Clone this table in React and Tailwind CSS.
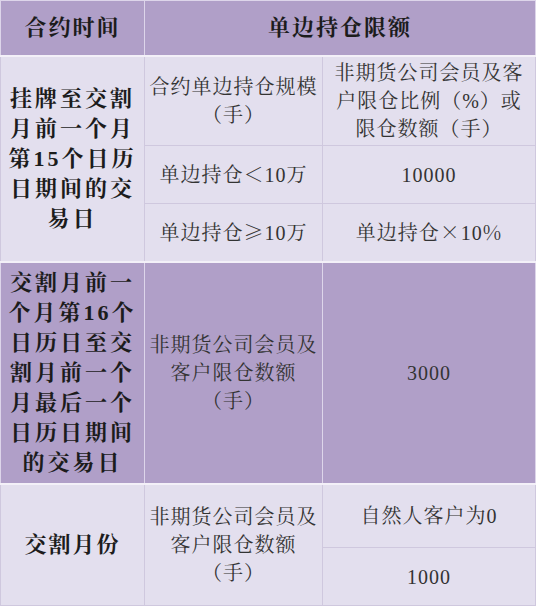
import React from 'react';

const font = { fontFamily: '"Liberation Serif", "Noto Serif CJK SC", "Noto Sans CJK SC", serif' };
const cjk = { fontFamily: '"Noto Serif CJK SC", "Noto Sans CJK SC", serif' };

function Lines({ lines }) {
  return lines.map((l, i) => <span key={i} className="block">{l}</span>);
}

export default function App() {
  const light = 'bg-[#e3dfee]';
  const dark = 'bg-[#b09fc8]';
  const cell = 'border border-[#cfc8de] text-center align-middle p-0';
  const head = 'text-[22px] font-bold tracking-[2px] text-[#1c1c1c] leading-[30px]';
  const body = 'text-[20px] tracking-[1px] text-[#333] leading-[28px]';

  return (
    <div className="w-[536px] h-[607px] bg-white overflow-hidden" style={font}>
      <table className="w-full border-collapse table-fixed">
        <colgroup>
          <col className="w-[144px]" />
          <col className="w-[178px]" />
          <col />
        </colgroup>
        <thead>
          <tr className={`h-[55px] ${dark}`}>
            <th className={`${cell} border-[#ddd5ea] border-b-2 border-b-[#f3f0f8] ${head}`}>合约时间</th>
            <th colSpan={2} className={`${cell} border-[#ddd5ea] border-b-2 border-b-[#f3f0f8] ${head}`}>单边持仓限额</th>
          </tr>
        </thead>
        <tbody>
          <tr className={`h-[90px] ${light}`}>
            <td rowSpan={3} className={`${cell} ${head} tracking-[3px]`}>
              <Lines lines={['挂牌至交割', '月前一个月', '第15个日历', '日期间的交', '易日']} />
            </td>
            <td className={`${cell} ${body}`}>
              <Lines lines={['合约单边持仓规模', '（手）']} />
            </td>
            <td className={`${cell} ${body}`}>
              <Lines lines={['非期货公司会员及客', '户限仓比例（%）或', '限仓数额（手）']} />
            </td>
          </tr>
          <tr className={`h-[58px] ${light}`}>
            <td className={`${cell} ${body}`}>单边持仓<span style={cjk}>＜</span>10万</td>
            <td className={`${cell} ${body}`}>10000</td>
          </tr>
          <tr className={`h-[58px] ${light}`}>
            <td className={`${cell} ${body}`}>单边持仓<span style={cjk}>≥</span>10万</td>
            <td className={`${cell} ${body}`}>单边持仓<span style={cjk}>×</span>10<span style={cjk}>%</span></td>
          </tr>
          <tr className={`h-[222px] ${dark}`}>
            <td className={`${cell} border-[#ddd5ea] border-t-2 border-t-[#f3f0f8] ${head} tracking-[3px]`}>
              <Lines lines={['交割月前一', '个月第16个', '日历日至交', '割月前一个', '月最后一个', '日历日期间', '的交易日']} />
            </td>
            <td className={`${cell} border-[#ddd5ea] border-t-2 border-t-[#f3f0f8] ${body}`}>
              <Lines lines={['非期货公司会员及', '客户限仓数额', '（手）']} />
            </td>
            <td className={`${cell} border-[#ddd5ea] border-t-2 border-t-[#f3f0f8] ${body}`}>3000</td>
          </tr>
          <tr className={`h-[64px] ${light}`}>
            <td rowSpan={2} className={`${cell} border-t-2 border-t-[#f3f0f8] ${head}`}>交割月份</td>
            <td rowSpan={2} className={`${cell} border-t-2 border-t-[#f3f0f8] ${body}`}>
              <Lines lines={['非期货公司会员及', '客户限仓数额', '（手）']} />
            </td>
            <td className={`${cell} border-t-2 border-t-[#f3f0f8] ${body}`}>自然人客户为0</td>
          </tr>
          <tr className={`h-[58px] ${light}`}>
            <td className={`${cell} ${body}`}>1000</td>
          </tr>
        </tbody>
      </table>
    </div>
  );
}
